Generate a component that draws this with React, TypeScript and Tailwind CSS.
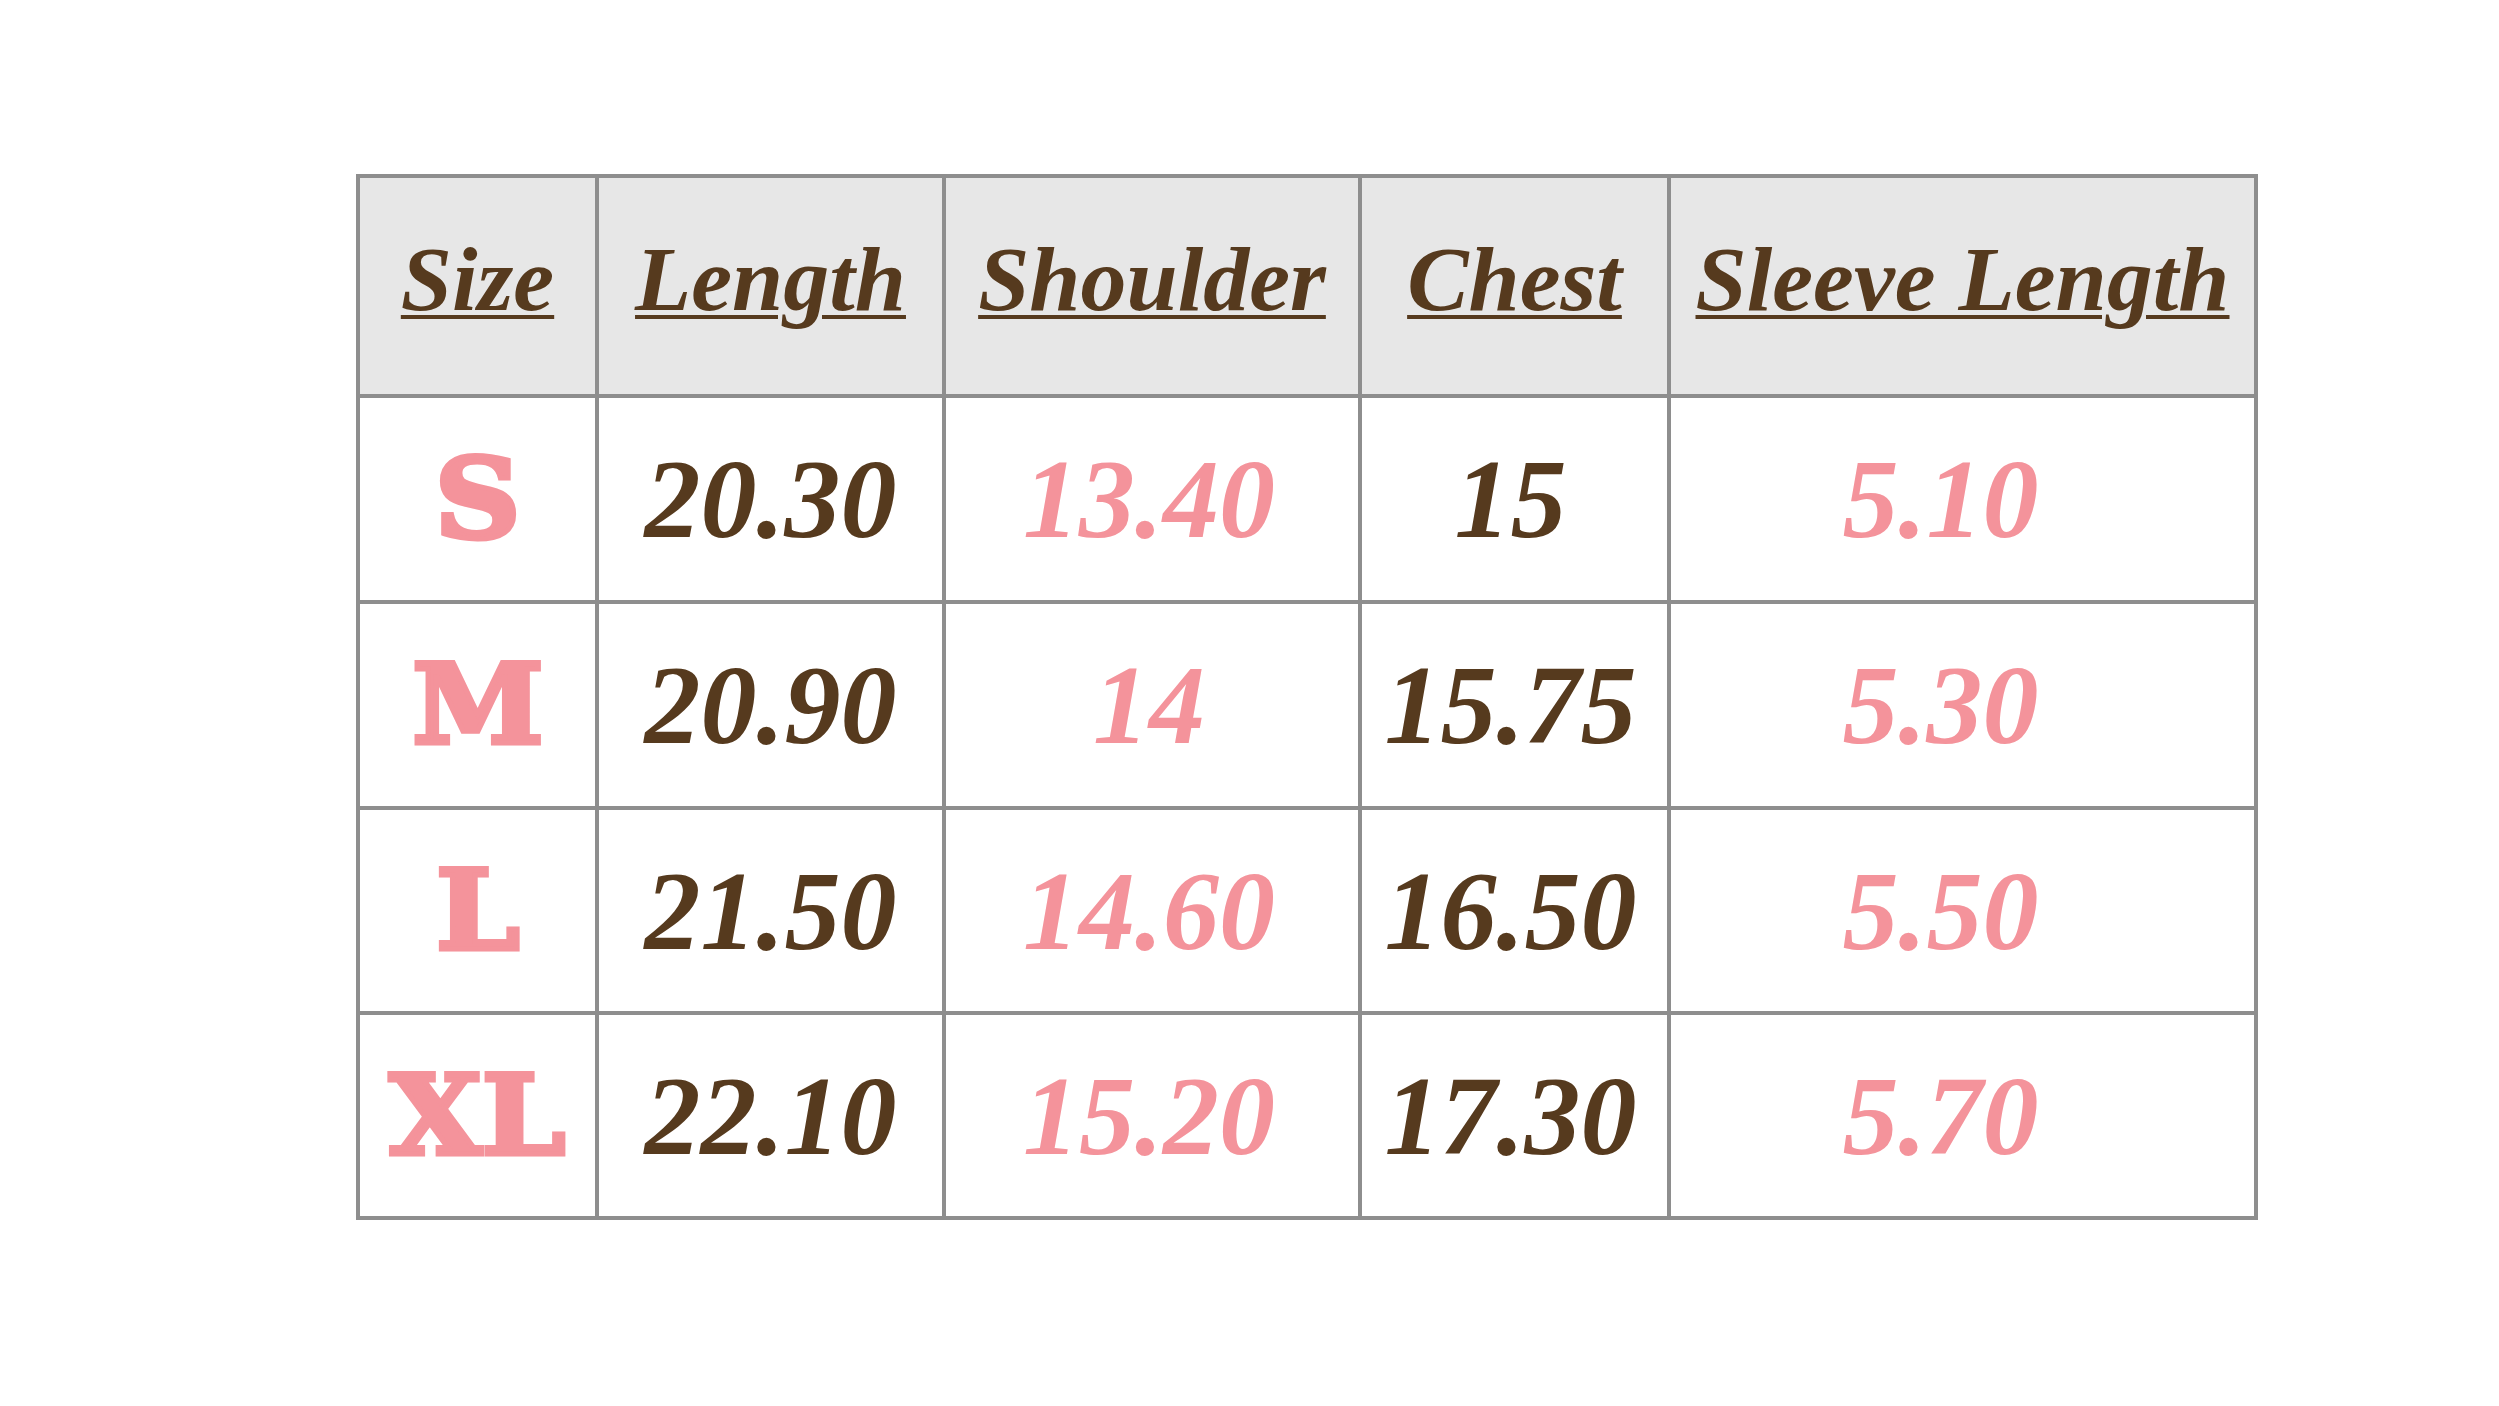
import React from "react";

const brown = "text-[#563a1e]";
const pink = "text-[#f4939b]";

type Row = { size: string; vals: string[] };

const rows: Row[] = [
  { size: "S", vals: ["20.30", "13.40", "15", "5.10"] },
  { size: "M", vals: ["20.90", "14", "15.75", "5.30"] },
  { size: "L", vals: ["21.50", "14.60", "16.50", "5.50"] },
  { size: "XL", vals: ["22.10", "15.20", "17.30", "5.70"] },
];

const headers = ["Size", "Length", "Shoulder", "Chest", "Sleeve Length"];
const widths = ["w-[239px]", "w-[347px]", "w-[416px]", "w-[309px]", "w-[587px]"];
const valColors = [brown, pink, brown, pink];

export default function App() {
  return (
    <div className="w-[2499px] h-[1406px] bg-white pt-[174px] pl-[356px]">
      <table className="border-collapse border-[4px] border-[#8e8e8e] font-['Liberation_Serif',serif] italic font-bold">
        <thead>
          <tr className="h-[220px] bg-[#e7e7e7]">
            {headers.map((h, i) => (
              <th
                key={h}
                className={`${widths[i]} border-[4px] border-[#8e8e8e] p-0 pb-[14px] text-center align-middle`}
              >
                <span
                  className={`${brown} text-[92px] leading-none underline decoration-[4px] underline-offset-[5px]`}
                >
                  {h}
                </span>
              </th>
            ))}
          </tr>
        </thead>
        <tbody>
          {rows.map((r, ri) => (
            <tr key={r.size} className={ri < 2 ? "h-[206px]" : "h-[205px]"}>
              <td className="border-[4px] border-[#8e8e8e] p-0 text-center align-middle">
                <span className={`${pink} not-italic font-['DejaVu_Serif',serif] font-bold text-[110px] leading-none inline-block scale-x-[1.08] [-webkit-text-stroke:5px_#f4939b]`}>
                  {r.size}
                </span>
              </td>
              {r.vals.map((v, vi) => (
                <td
                  key={vi}
                  className={`border-[4px] border-[#8e8e8e] p-0 text-center align-middle ${vi === 3 ? "pr-[44px]" : ""} ${vi === 2 ? "pr-[8px]" : ""} ${vi === 1 ? "pr-[6px]" : ""}`}
                >
                  <span className={`${valColors[vi]} text-[112px] leading-none`}>{v}</span>
                </td>
              ))}
            </tr>
          ))}
        </tbody>
      </table>
    </div>
  );
}
